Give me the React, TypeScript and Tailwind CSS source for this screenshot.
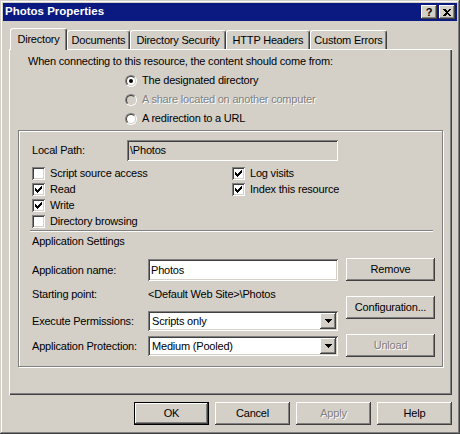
import React from 'react';

const raised =
  'shadow-[inset_-1px_-1px_#404040,inset_1px_1px_#fff,inset_-2px_-2px_#808080,inset_2px_2px_#d4d0c8]';
const sunken =
  'shadow-[inset_1px_1px_#808080,inset_-1px_-1px_#fff,inset_2px_2px_#404040,inset_-2px_-2px_#d4d0c8]';
const disabledText = 'text-[#808080] [text-shadow:1px_1px_0_#fff]';

function CheckMark() {
  // classic 7x7 pixel tick
  const px: [number, number, number][] = [
    [6, 0, 1], [5, 1, 2], [0, 2, 1], [4, 2, 3], [0, 3, 2], [3, 3, 3], [0, 4, 5], [1, 5, 3], [2, 6, 1],
  ];
  return (
    <svg width="7" height="7" viewBox="0 0 7 7" shapeRendering="crispEdges">
      {px.map(([x, y, w], i) => (
        <rect key={i} x={x} y={y} width={w} height={1} fill="#000" />
      ))}
    </svg>
  );
}

function Checkbox({ label, checked }: { label: string; checked?: boolean }) {
  return (
    <div className="flex h-[16px] items-start">
      <span className={`mt-[2px] flex h-[13px] w-[13px] shrink-0 items-center justify-center bg-white ${sunken}`}>
        {checked && <CheckMark />}
      </span>
      <span className="ml-[5px] leading-[16px]">{label}</span>
    </div>
  );
}

function Radio({ label, selected, disabled }: { label: string; selected?: boolean; disabled?: boolean }) {
  return (
    <div className="flex h-[19px] items-center pl-[116px]">
      <span className="flex h-[12px] w-[12px] shrink-0 rounded-full border border-t-[#808080] border-l-[#808080] border-r-white border-b-white">
        <span
          className={`flex h-full w-full items-center justify-center rounded-full border border-t-[#404040] border-l-[#404040] border-r-[#d4d0c8] border-b-[#d4d0c8] ${
            disabled ? 'bg-[#d4d0c8]' : 'bg-white'
          }`}
        >
          {selected && <span className="h-[4px] w-[4px] rounded-full bg-black" />}
        </span>
      </span>
      <span className={`ml-[5px] ${disabled ? disabledText : ''}`}>{label}</span>
    </div>
  );
}

function Button({
  label,
  className = '',
  disabled,
  isDefault,
}: {
  label: string;
  className?: string;
  disabled?: boolean;
  isDefault?: boolean;
}) {
  if (isDefault) {
    return (
      <div className={`h-[23px] border border-black ${className}`}>
        <div className={`flex h-full w-full items-center justify-center ${raised}`}>{label}</div>
      </div>
    );
  }
  return (
    <div className={`flex h-[23px] items-center justify-center ${raised} ${disabled ? disabledText : ''} ${className}`}>
      {label}
    </div>
  );
}

function Select({ value }: { value: string }) {
  return (
    <div className={`flex h-[20px] w-[190px] items-center bg-white pl-[4px] pr-[2px] ${sunken}`}>
      <span className="flex-1">{value}</span>
      <span className={`flex h-[16px] w-[16px] items-center justify-center bg-[#d4d0c8] ${raised}`}>
        <svg width="7" height="4" viewBox="0 0 7 4" shapeRendering="crispEdges">
          <path d="M0 0h7v1h-1v1h-1v1h-1v1h-1v-1h-1v-1h-1v-1h-1z" fill="#000" />
        </svg>
      </span>
    </div>
  );
}

function Tab({ label, active, className }: { label: string; active?: boolean; className: string }) {
  return (
    <div
      className={`flex items-center justify-center rounded-t-[3px] border-l border-t border-white border-r border-r-[#404040] bg-[#d4d0c8] shadow-[inset_-1px_0_#808080] ${
        active ? 'relative z-10 -mb-[1px] h-[22px]' : 'h-[19px] pt-[1px]'
      } ${className}`}
    >
      {label}
    </div>
  );
}

export default function App() {
  return (
    <div
      className={`h-[434px] w-[460px] bg-[#d4d0c8] px-[3px] pt-[3px] text-[11px] tracking-[-0.2px] text-black [font-family:'Liberation_Sans',Arial,sans-serif] shadow-[inset_-1px_-1px_#404040,inset_1px_1px_#d4d0c8,inset_-2px_-2px_#808080,inset_2px_2px_#fff]`}
    >
      {/* Title bar */}
      <div className="flex h-[18px] items-center justify-between bg-[#0a1a80] pl-[2px] pr-[2px]">
        <span className="text-[11.5px] font-bold tracking-normal text-white">Photos Properties</span>
        <div className="flex gap-[2px]">
          <div className={`flex h-[14px] w-[16px] items-center justify-center bg-[#d4d0c8] text-[11px] font-bold leading-none ${raised}`}>
            ?
          </div>
          <div className={`flex h-[14px] w-[16px] items-center justify-center bg-[#d4d0c8] ${raised}`}>
            <svg width="8" height="7" viewBox="0 0 8 7" shapeRendering="crispEdges">
              <path d="M0 0h2l2 2 2-2h2l-3 3.5 3 3.5h-2l-2-2-2 2h-2l3-3.5z" fill="#000" />
            </svg>
          </div>
        </div>
      </div>

      {/* Tabs */}
      <div className="mt-[7px] flex h-[21px] items-end pl-[7px]">
        <Tab label="Directory" active className="w-[57px]" />
        <Tab label="Documents" className="w-[63px]" />
        <Tab label="Directory Security" className="w-[96px]" />
        <Tab label="HTTP Headers" className="w-[84px]" />
        <Tab label="Custom Errors" className="w-[77px]" />
      </div>

      {/* Tab panel */}
      <div className="ml-[6px] h-[346px] w-[443px] bg-[#d4d0c8] pt-[3px] shadow-[inset_1px_1px_#fff,inset_-1px_-1px_#404040,inset_-2px_-2px_#808080]">
        <div className="flex h-[19px] items-center pl-[19px]">
          When connecting to this resource, the content should come from:
        </div>
        <Radio label="The designated directory" selected />
        <Radio label="A share located on another computer" disabled />
        <Radio label="A redirection to a URL" />

        {/* Group box */}
        <div className="ml-[9px] mt-[2px] h-[237px] w-[425px] border border-[#808080] shadow-[1px_1px_0_#fff,inset_1px_1px_0_#fff]">
          <div className="mt-[9px] flex h-[21px] items-center pl-[13px]">
            <span className="w-[95px]">Local Path:</span>
            <div className={`flex h-[21px] w-[211px] items-center bg-[#d4d0c8] pl-[3px] ${sunken}`}>\Photos</div>
          </div>

          <div className="mt-[4px] flex">
            <div className="w-[213px] pl-[13px]">
              <Checkbox label="Script source access" />
              <Checkbox label="Read" checked />
              <Checkbox label="Write" checked />
              <Checkbox label="Directory browsing" />
            </div>
            <div>
              <Checkbox label="Log visits" checked />
              <Checkbox label="Index this resource" checked />
            </div>
          </div>

          <div className="ml-[11px] mt-[1px] h-[2px] w-[403px] border-t border-b border-t-[#808080] border-b-white" />

          <div className="mt-[2px] h-[14px] pl-[13px] leading-[14px]">Application Settings</div>

          <div className="mt-[10px] flex gap-[8px] pl-[13px]">
            <div className="w-[306px]">
              <div className="mt-[1px] flex h-[22px] items-center">
                <span className="w-[116px]">Application name:</span>
                <div className={`flex h-[22px] w-[190px] items-center bg-white pl-[3px] ${sunken}`}>Photos</div>
              </div>
              <div className="mt-[3px] flex h-[20px] items-center">
                <span className="w-[116px]">Starting point:</span>
                <span>&lt;Default Web Site&gt;\Photos</span>
              </div>
              <div className="mt-[7px] flex h-[20px] items-center">
                <span className="w-[116px]">Execute Permissions:</span>
                <Select value="Scripts only" />
              </div>
              <div className="mt-[5px] flex h-[20px] items-center">
                <span className="w-[116px]">Application Protection:</span>
                <Select value="Medium (Pooled)" />
              </div>
            </div>
            <div className="flex w-[89px] flex-col">
              <Button label="Remove" />
              <Button label="Configuration..." className="mt-[15px]" />
              <Button label="Unload" disabled className="mt-[15px]" />
            </div>
          </div>
        </div>
      </div>

      {/* Dialog buttons */}
      <div className="mt-[7px] flex justify-end gap-[6px] pr-[5px]">
        <Button label="OK" isDefault className="w-[75px]" />
        <Button label="Cancel" className="w-[75px]" />
        <Button label="Apply" disabled className="w-[75px]" />
        <Button label="Help" className="w-[75px]" />
      </div>
    </div>
  );
}
